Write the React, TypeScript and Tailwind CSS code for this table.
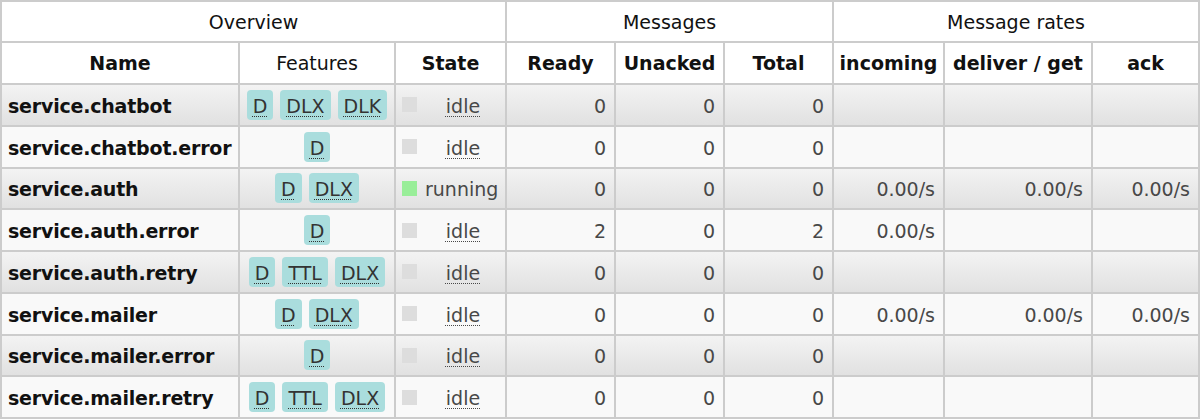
import React from "react";

type Row = {
  name: string;
  features: string[];
  state: "idle" | "running";
  ready: string;
  unacked: string;
  total: string;
  incoming: string;
  deliver: string;
  ack: string;
};

const rows: Row[] = [
  { name: "service.chatbot", features: ["D", "DLX", "DLK"], state: "idle", ready: "0", unacked: "0", total: "0", incoming: "", deliver: "", ack: "" },
  { name: "service.chatbot.error", features: ["D"], state: "idle", ready: "0", unacked: "0", total: "0", incoming: "", deliver: "", ack: "" },
  { name: "service.auth", features: ["D", "DLX"], state: "running", ready: "0", unacked: "0", total: "0", incoming: "0.00/s", deliver: "0.00/s", ack: "0.00/s" },
  { name: "service.auth.error", features: ["D"], state: "idle", ready: "2", unacked: "0", total: "2", incoming: "0.00/s", deliver: "", ack: "" },
  { name: "service.auth.retry", features: ["D", "TTL", "DLX"], state: "idle", ready: "0", unacked: "0", total: "0", incoming: "", deliver: "", ack: "" },
  { name: "service.mailer", features: ["D", "DLX"], state: "idle", ready: "0", unacked: "0", total: "0", incoming: "0.00/s", deliver: "0.00/s", ack: "0.00/s" },
  { name: "service.mailer.error", features: ["D"], state: "idle", ready: "0", unacked: "0", total: "0", incoming: "", deliver: "", ack: "" },
  { name: "service.mailer.retry", features: ["D", "TTL", "DLX"], state: "idle", ready: "0", unacked: "0", total: "0", incoming: "", deliver: "", ack: "" },
];

export default function App() {
  return (
    <div
      className="w-[1200px] h-[419px] overflow-hidden bg-white text-[19px] leading-none"
      style={{ fontFamily: '"DejaVu Sans", Verdana, sans-serif' }}
    >
      <div className="grid grid-cols-[236px_154px_109px_107px_107px_107px_109px_146px_105px] grid-rows-[39px_40px_repeat(8,39.75px)] gap-[2px] bg-[#cccccc] p-[2px] w-[1200px]">
        <div className="col-span-3 bg-white flex items-center justify-center pt-[2px] text-[#111]">Overview</div>
        <div className="col-span-3 bg-white flex items-center justify-center pt-[2px] text-[#111]">Messages</div>
        <div className="col-span-3 bg-white flex items-center justify-center pt-[2px] text-[#111]">Message rates</div>

        <div className="bg-white flex items-center justify-center pt-[1px] font-bold text-[#111]">Name</div>
        <div className="bg-white flex items-center justify-center pt-[1px] text-[#111]">Features</div>
        <div className="bg-white flex items-center justify-center pt-[1px] font-bold text-[#111]">State</div>
        <div className="bg-white flex items-center justify-center pt-[1px] font-bold text-[#111]">Ready</div>
        <div className="bg-white flex items-center justify-center pt-[1px] font-bold text-[#111]">Unacked</div>
        <div className="bg-white flex items-center justify-center pt-[1px] font-bold text-[#111]">Total</div>
        <div className="bg-white flex items-center justify-center pt-[1px] font-bold text-[#111]">incoming</div>
        <div className="bg-white flex items-center justify-center pt-[1px] font-bold text-[#111]">deliver / get</div>
        <div className="bg-white flex items-center justify-center pt-[1px] font-bold text-[#111]">ack</div>

        {rows.map((r, i) => {
          const bg = i % 2 === 0 ? "bg-linear-to-b from-[#f3f3f3] to-[#e1e1e1]" : "bg-[#f9f9f9]";
          const num = `${bg} flex items-center justify-end pr-[8px] pt-[3px] text-[#484848]`;
          return (
            <React.Fragment key={r.name}>
              <div className={`${bg} flex items-center pl-[6px] pt-[3px] font-bold tracking-[-0.2px] text-[#111]`}>{r.name}</div>
              <div className={`${bg} flex items-center justify-center gap-[7px]`}>
                {r.features.map((f) => (
                  <span
                    key={f}
                    className="h-[30px] px-[6px] pt-[3px] rounded-[4px] bg-[#aadddd] text-[#333333] flex items-center underline decoration-dotted decoration-[1px] underline-offset-[3px]"
                  >
                    {f}
                  </span>
                ))}
              </div>
              <div className={`${bg} flex items-center pl-[6px] pr-[6px] text-[#484848]`}>
                <span
                  className={`w-[15px] h-[15px] shrink-0 ${r.state === "running" ? "bg-[#99ee99]" : "bg-[#dddddd]"}`}
                />
                {r.state === "running" ? (
                  <span className="ml-[8px] pt-[3px]">running</span>
                ) : (
                  <span className="flex-1 text-center pl-[10px] pt-[3px]">
                    <span className="underline decoration-dotted decoration-[1px] underline-offset-[3px]">idle</span>
                  </span>
                )}
              </div>
              <div className={num}>{r.ready}</div>
              <div className={num}>{r.unacked}</div>
              <div className={num}>{r.total}</div>
              <div className={num}>{r.incoming}</div>
              <div className={num}>{r.deliver}</div>
              <div className={num}>{r.ack}</div>
            </React.Fragment>
          );
        })}
      </div>
    </div>
  );
}
